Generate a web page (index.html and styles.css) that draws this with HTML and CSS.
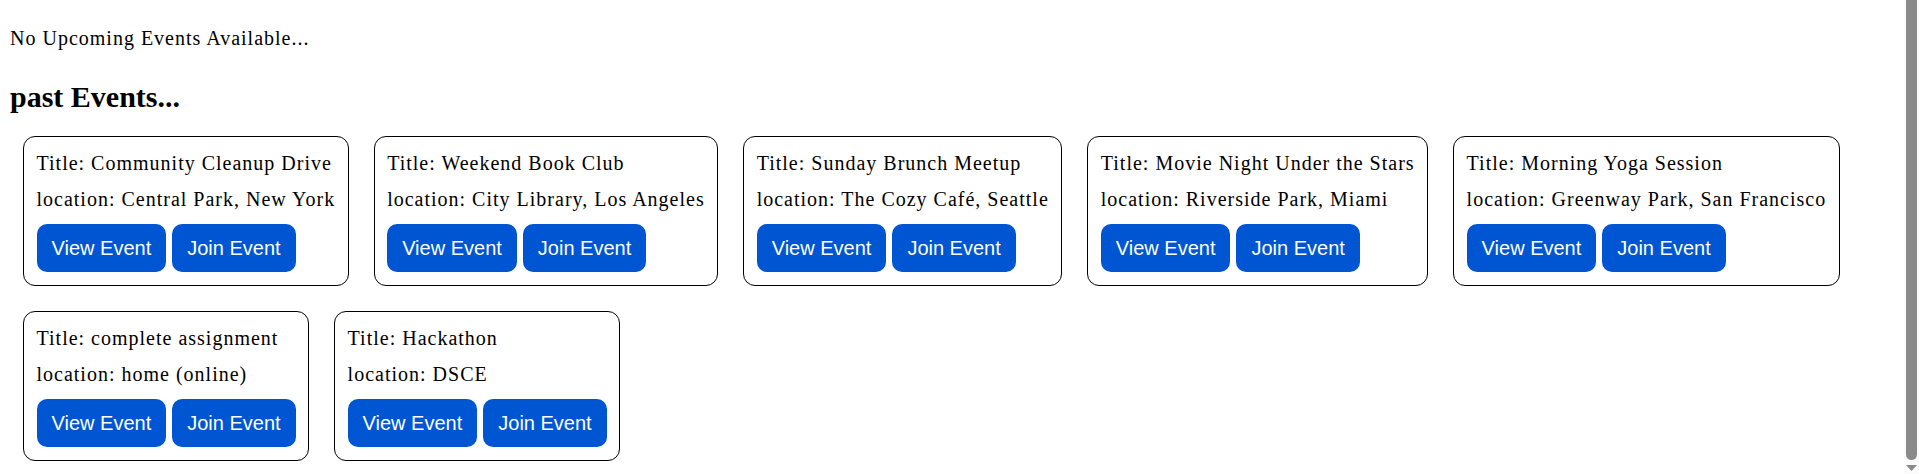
FILE: index.html
```html
<!DOCTYPE html>
<html lang="en">
<head>
<meta charset="utf-8">
<title>Events</title>
<link rel="stylesheet" href="styles.css">
</head>
<body>
<p class="notice">No Upcoming Events Available...</p>
<h2 class="section-title">past Events...</h2>
<div class="events">
  <div class="card">
    <div class="card-title">Title: Community Cleanup Drive</div>
    <div class="card-location">location: Central Park, New York</div>
    <div class="actions"><button class="btn">View Event</button><button class="btn">Join Event</button></div>
  </div>
  <div class="card">
    <div class="card-title">Title: Weekend Book Club</div>
    <div class="card-location">location: City Library, Los Angeles</div>
    <div class="actions"><button class="btn">View Event</button><button class="btn">Join Event</button></div>
  </div>
  <div class="card">
    <div class="card-title">Title: Sunday Brunch Meetup</div>
    <div class="card-location">location: The Cozy Café, Seattle</div>
    <div class="actions"><button class="btn">View Event</button><button class="btn">Join Event</button></div>
  </div>
  <div class="card">
    <div class="card-title">Title: Movie Night Under the Stars</div>
    <div class="card-location">location: Riverside Park, Miami</div>
    <div class="actions"><button class="btn">View Event</button><button class="btn">Join Event</button></div>
  </div>
  <div class="card">
    <div class="card-title">Title: Morning Yoga Session</div>
    <div class="card-location">location: Greenway Park, San Francisco</div>
    <div class="actions"><button class="btn">View Event</button><button class="btn">Join Event</button></div>
  </div>
  <div class="card">
    <div class="card-title">Title: complete assignment</div>
    <div class="card-location">location: home (online)</div>
    <div class="actions"><button class="btn">View Event</button><button class="btn">Join Event</button></div>
  </div>
  <div class="card">
    <div class="card-title">Title: Hackathon</div>
    <div class="card-location">location: DSCE</div>
    <div class="actions"><button class="btn">View Event</button><button class="btn">Join Event</button></div>
  </div>
</div>
<div class="scrollbar" aria-hidden="true">
  <div class="scrollbar-thumb"></div>
  <svg class="scrollbar-arrow" width="15" height="14" viewBox="0 0 15 14"><polygon points="2,5 13,5 7.5,11" fill="#8a8a8a"/></svg>
</div>
</body>
</html>
```

FILE: styles.css
```css
html {
  margin: 0;
  background: #ffffff;
}

body {
  margin: 0;
  padding: 0 25px 10px 10px;
  font-family: "Liberation Serif", "Times New Roman", serif;
  font-size: 20px;
  color: #000000;
}

.notice {
  margin: 0;
  padding-top: 27px;
  line-height: 23px;
  letter-spacing: 1px;
}

.section-title {
  margin: 30px 0 9px;
  font-size: 30px;
  line-height: 34px;
  font-weight: bold;
}

.events {
  display: flex;
  flex-wrap: wrap;
  align-items: flex-start;
  gap: 25.5px 25px;
  padding: 13px;
}

.card {
  border: 1px solid #000000;
  border-radius: 12px;
  padding: 12.5px;
}

.card-title,
.card-location {
  line-height: 26px;
  white-space: nowrap;
  letter-spacing: 1px;
}

.card-title {
  margin-bottom: 10px;
}

.card-location {
  margin-bottom: 12.5px;
}

.actions {
  display: flex;
  gap: 6px;
}

.btn {
  border: none;
  border-radius: 10px;
  background: #0056d2;
  color: #ffffff;
  font-family: "Liberation Sans", Arial, sans-serif;
  font-size: 20px;
  line-height: 23px;
  padding: 12.5px 15px;
  margin: 0;
  cursor: pointer;
}

.scrollbar {
  position: fixed;
  top: 0;
  right: 0;
  bottom: 0;
  width: 15px;
  background: #fbfbfb;
  display: flex;
  flex-direction: column;
  align-items: center;
}

.scrollbar-thumb {
  flex: 1;
  width: 11px;
  background: #8a8a8a;
  border-radius: 0 0 6px 6px;
}

.scrollbar-arrow {
  display: block;
  flex: none;
}
```
